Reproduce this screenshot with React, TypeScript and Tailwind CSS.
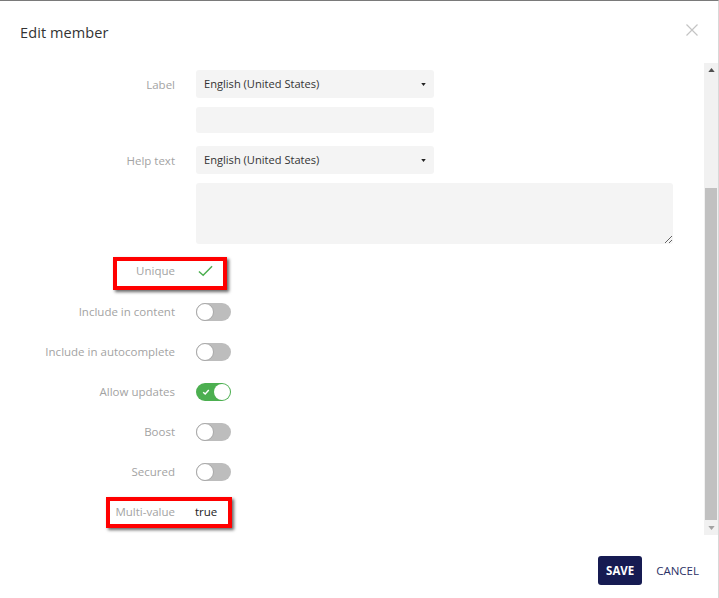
import React from "react";

type ToggleProps = { checked?: boolean };

const Toggle = ({ checked = false }: ToggleProps) => {
  if (checked) {
    return (
      <div className="relative h-[18px] w-[35px] rounded-full bg-[#4caf50]">
        <svg
          viewBox="0 0 10 10"
          className="absolute left-[6px] top-[5px] h-[8px] w-[8px]"
        >
          <path
            d="M1.5 5.2 L4 7.5 L8.5 2.5"
            fill="none"
            stroke="white"
            strokeWidth="1.8"
          />
        </svg>
        <div className="absolute right-[1px] top-[1px] h-[16px] w-[16px] rounded-full bg-white" />
      </div>
    );
  }
  return (
    <div className="relative h-[18px] w-[35px] rounded-full bg-[#bdbdbd]">
      <div className="absolute left-0 top-0 h-[18px] w-[18px] rounded-full border border-[#a8a8a8] bg-white" />
    </div>
  );
};

const Caret = () => (
  <svg viewBox="0 0 6 4" className="h-[3px] w-[5px]">
    <path d="M0 0 L6 0 L3 4 Z" fill="#222" />
  </svg>
);

const SelectBox = () => (
  <div className="flex h-[28px] w-[238px] items-center justify-between rounded-[3px] bg-[#f4f4f4] pl-[8px] pr-[8px] text-[11.1px] text-[#333]">
    <span>English (United States)</span>
    <Caret />
  </div>
);

const toggles: { label: string; checked?: boolean }[] = [
  { label: "Include in content" },
  { label: "Include in autocomplete" },
  { label: "Allow updates", checked: true },
  { label: "Boost" },
  { label: "Secured" },
];

const App = () => {
  return (
    <div
      className="flex h-[598px] w-[719px] flex-col overflow-hidden border-t border-r border-[#7a7a7a] border-r-[#d8d8d8] bg-white"
      style={{ fontFamily: '"Open Sans", "Liberation Sans", sans-serif' }}
    >
      {/* header */}
      <div className="flex h-[62px] shrink-0 items-center justify-between pl-[20px] pr-[20px]">
        <h1 className="mt-[1px] text-[14.5px] font-medium tracking-[0.1px] text-[#333]">
          Edit member
        </h1>
        <svg viewBox="0 0 12 12" className="mb-[4px] h-[12px] w-[12px]">
          <path d="M0.5 0.5 L11.5 11.5 M11.5 0.5 L0.5 11.5" stroke="#c4c4c4" strokeWidth="1.2" />
        </svg>
      </div>

      {/* body */}
      <div className="flex h-[472px] shrink-0">
        <div className="flex flex-1 flex-col pt-[7px]">
          <div className="flex items-start">
            <div className="w-[175px] pt-[6px] text-right text-[11.5px] text-[#a3a3a3]">
              Label
            </div>
            <div className="ml-[21px] flex flex-col gap-[9px]">
              <SelectBox />
              <div className="h-[26px] w-[238px] rounded-[3px] bg-[#f4f4f4]" />
            </div>
          </div>

          <div className="mt-[13px] flex items-start">
            <div className="w-[175px] pt-[6px] text-right text-[11.5px] text-[#a3a3a3]">
              Help text
            </div>
            <div className="ml-[21px] flex flex-col gap-[9px]">
              <SelectBox />
              <textarea className="h-[61px] w-[477px] rounded-[3px] bg-[#f4f4f4] outline-none" />
            </div>
          </div>

          <div className="relative mt-[7px] flex h-[41px] items-center">
            <div className="mb-[1px] w-[175px] text-right text-[11.5px] text-[#a3a3a3]">
              Unique
            </div>
            <svg viewBox="0 0 16 12" className="mb-[1px] ml-[23px] h-[12px] w-[15px]">
              <path d="M1 6.5 L5.5 10.5 L15 1" fill="none" stroke="#4caf50" strokeWidth="1.6" />
            </svg>
            <div className="absolute left-[113px] top-[6px] h-[33px] w-[114px] border-4 border-[#ff0000] shadow-[2px_2px_3px_rgba(0,0,0,0.6)]" />
          </div>

          {toggles.map((t) => (
            <div key={t.label} className="flex h-[40px] items-center">
              <div className="w-[175px] text-right text-[11.5px] text-[#a3a3a3]">
                {t.label}
              </div>
              <div className="ml-[21px]">
                <Toggle checked={t.checked} />
              </div>
            </div>
          ))}

          <div className="relative flex h-[40px] items-center">
            <div className="w-[175px] text-right text-[11.5px] text-[#a3a3a3]">
              Multi-value
            </div>
            <div className="ml-[20px] text-[11.5px] text-[#222]">true</div>
            <div className="absolute left-[106px] top-[5px] h-[31px] w-[126px] border-4 border-[#ff0000] shadow-[2px_2px_3px_rgba(0,0,0,0.6)]" />
          </div>
        </div>

        {/* scrollbar */}
        <div className="flex w-[14px] flex-col bg-[#f1f1f1]">
          <div className="flex h-[14px] items-center justify-center">
            <svg viewBox="0 0 8 5" className="h-[4px] w-[7px]">
              <path d="M0 5 L8 5 L4 0 Z" fill="#505050" />
            </svg>
          </div>
          <div className="h-[111px]" />
          <div className="mx-[1px] h-[332px] bg-[#c1c1c1]" />
          <div className="flex h-[15px] items-center justify-center">
            <svg viewBox="0 0 8 5" className="h-[4px] w-[7px]">
              <path d="M0 0 L8 0 L4 5 Z" fill="#a3a3a3" />
            </svg>
          </div>
        </div>
      </div>

      {/* footer */}
      <div className="flex flex-1 items-start justify-end gap-[14px] pr-[19px] pt-[21px]">
        <button className="h-[29px] w-[44px] rounded-[3px] bg-[#161b52] text-[11.5px] font-bold text-white">
          SAVE
        </button>
        <button className="h-[29px] text-[11.5px] text-[#2c3166]">CANCEL</button>
      </div>
    </div>
  );
};

export default App;
